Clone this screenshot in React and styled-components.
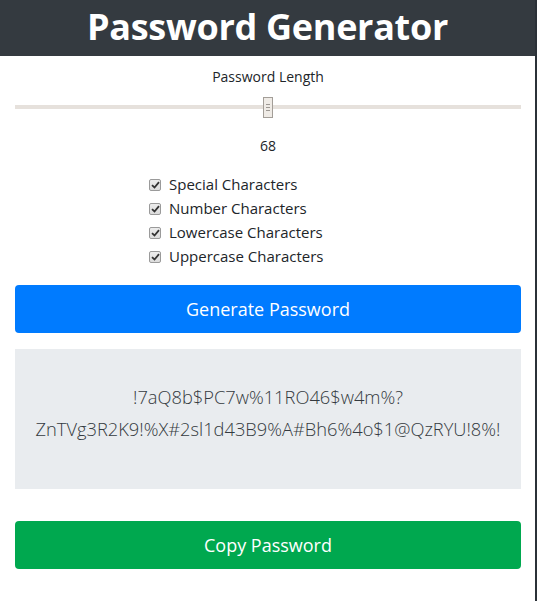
import React, { useState } from "react";
import styled, { createGlobalStyle } from "styled-components";

const Global = createGlobalStyle`
  html, body { margin: 0; padding: 0; background: #fff; }
  body { font-family: "Open Sans", "Noto Sans", sans-serif; color: #212529; }
`;

const Page = styled.div`
  width: 535px;
  min-height: 601px;
  border-right: 2px solid #2b3138;
  background: #fff;
  box-sizing: content-box;
`;

const Header = styled.header`
  height: 56px;
  background: #343a40;
  display: flex;
  align-items: center;
  justify-content: center;
`;

const Title = styled.h1`
  margin: 0;
  color: #fff;
  font-size: 36px;
  font-weight: 700;
  letter-spacing: -0.3px;
  line-height: 1;
  padding-bottom: 2px;
`;

const Main = styled.main`
  padding: 9px 14px 0 15px;
  display: flex;
  flex-direction: column;
`;

const Caption = styled.div`
  text-align: center;
  font-size: 14px;
  line-height: 24px;
  color: #212529;
`;

const Range = styled.input`
  -webkit-appearance: none;
  appearance: none;
  width: 100%;
  height: 20px;
  margin: 8px 0 0;
  background: transparent;
  &::-webkit-slider-runnable-track {
    height: 4px;
    background: #e6e1dc;
  }
  &::-webkit-slider-thumb {
    -webkit-appearance: none;
    width: 10px;
    height: 21px;
    margin-top: -8px;
    box-sizing: border-box;
    border: 1px solid #a39e98;
    background:
      linear-gradient(#9d9893, #9d9893) center calc(50% - 3px) / 4px 1px no-repeat,
      linear-gradient(#9d9893, #9d9893) center 50% / 4px 1px no-repeat,
      linear-gradient(#9d9893, #9d9893) center calc(50% + 3px) / 4px 1px no-repeat,
      #efebe6;
  }
`;

const Value = styled.div`
  text-align: center;
  font-size: 14px;
  line-height: 24px;
  margin-top: 17px;
`;

const Options = styled.div`
  display: flex;
  flex-direction: column;
  padding-left: 134px;
  margin-top: 14px;
`;

const Option = styled.label`
  display: flex;
  align-items: center;
  gap: 8px;
  height: 24px;
  font-size: 15px;
  color: #212529;
  cursor: pointer;
`;

const HiddenInput = styled.input`
  position: absolute;
  opacity: 0;
  width: 0;
  height: 0;
  margin: 0;
`;

const Box = styled.span`
  width: 12px;
  height: 12px;
  box-sizing: border-box;
  border: 1px solid #9a9a9a;
  border-radius: 2px;
  background: linear-gradient(#ececec, #dcdcdc);
  display: flex;
  align-items: center;
  justify-content: center;
  margin-top: 1px;
`;

const Button = styled.button`
  display: block;
  width: 100%;
  height: 48px;
  border: none;
  border-radius: 4px;
  background: ${(p) => p.$bg};
  color: #fff;
  font-family: inherit;
  font-size: 18px;
  cursor: pointer;
  margin-top: ${(p) => p.$mt}px;
`;

const Output = styled.div`
  margin-top: 16px;
  height: 140px;
  background: #e9ecef;
  display: flex;
  align-items: center;
  justify-content: center;
  text-align: center;
  font-size: 18.3px;
  font-weight: 300;
  line-height: 32px;
  color: #343a40;
  padding-bottom: 12px;
  box-sizing: border-box;
`;

const options = [
  "Special Characters",
  "Number Characters",
  "Lowercase Characters",
  "Uppercase Characters",
];

export default function App() {
  const [len, setLen] = useState(68);
  return (
    <Page>
      <Global />
      <Header>
        <Title>Password Generator</Title>
      </Header>
      <Main>
        <Caption>Password Length</Caption>
        <Range
          type="range"
          min="8"
          max="128"
          value={len}
          onChange={(e) => setLen(Number(e.target.value))}
        />
        <Value>{len}</Value>
        <Options>
          {options.map((o) => (
            <Option key={o}>
              <HiddenInput type="checkbox" defaultChecked />
              <Box>
                <svg width="9" height="8" viewBox="0 0 9 8">
                  <path d="M1 4.2 L3.5 6.5 L8 1.2" fill="none" stroke="#333" strokeWidth="1.8" />
                </svg>
              </Box>
              {o}
            </Option>
          ))}
        </Options>
        <Button $bg="#007bff" $mt={17}>Generate Password</Button>
        <Output>
          <div>
            !7aQ8b$PC7w%11RO46$w4m%?
            <br />
            ZnTVg3R2K9!%X#2sl1d43B9%A#Bh6%4o$1@QzRYU!8%!
          </div>
        </Output>
        <Button $bg="#00a84f" $mt={32}>Copy Password</Button>
      </Main>
    </Page>
  );
}
